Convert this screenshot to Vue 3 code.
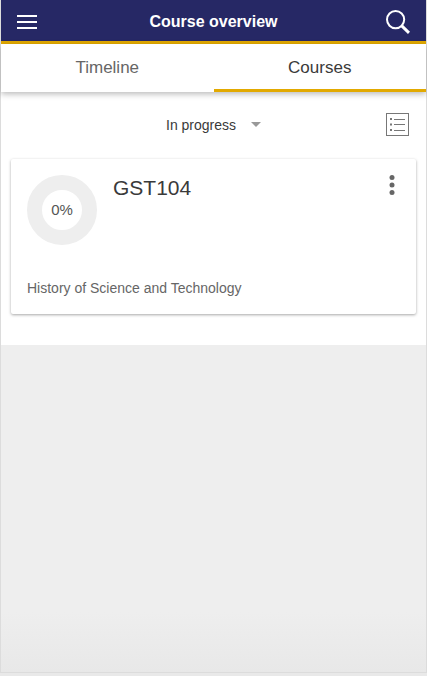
<template>
  <div class="app-frame">
    <header class="top-bar">
      <button class="bar-button" type="button" aria-label="Menu">
        <svg width="20" height="14" viewBox="0 0 20 14" fill="#fff">
          <rect width="20" height="2" />
          <rect y="6" width="20" height="2" />
          <rect y="12" width="20" height="2" />
        </svg>
      </button>
      <h1>Course overview</h1>
      <button class="bar-button search" type="button" aria-label="Search">
        <svg width="24" height="24" viewBox="0 0 24 24" fill="none" stroke="#fff">
          <circle cx="9.6" cy="9.6" r="8.6" stroke-width="2" />
          <path d="M15.8 15.8L23 22.8" stroke-width="3" />
        </svg>
      </button>
    </header>

    <nav class="tabs">
      <button
        v-for="tab in tabs"
        :key="tab"
        type="button"
        class="tab"
        :class="{ active: activeTab === tab }"
        @click="activeTab = tab"
      >
        {{ tab }}
      </button>
    </nav>

    <main class="content">
      <div class="filters">
        <div class="select-wrap">
          <select v-model="filter" aria-label="Filter courses">
            <option value="inprogress">In progress</option>
          </select>
          <svg class="caret" width="10" height="5" viewBox="0 0 10 5">
            <path d="M0 0H10L5 5Z" fill="#999" />
          </svg>
        </div>
        <button class="list-button" type="button" aria-label="List view">
          <svg width="23" height="23" viewBox="0 0 23 23" fill="none" stroke="#777">
            <rect x="0.5" y="0.5" width="22" height="22" />
            <path d="M8 6.5H19M8 11.5H19M8 17.5H19" />
            <path d="M4 6H6M4 11.5H6M4 17H6" stroke-width="2" />
          </svg>
        </button>
      </div>

      <article v-for="course in courses" :key="course.code" class="card">
        <div class="card-head">
          <div class="progress">
            <span>{{ course.progress }}%</span>
          </div>
          <h2>{{ course.code }}</h2>
          <button class="more-button" type="button" aria-label="Course options">
            <svg width="6" height="20" viewBox="0 0 6 20" fill="#666">
              <circle cx="3" cy="2.5" r="2.5" />
              <circle cx="3" cy="10" r="2.5" />
              <circle cx="3" cy="17.5" r="2.5" />
            </svg>
          </button>
        </div>
        <p class="course-name">{{ course.name }}</p>
      </article>
    </main>

    <div class="backdrop"></div>
  </div>
</template>

<script setup>
import { ref } from 'vue'

const tabs = ['Timeline', 'Courses']
const activeTab = ref('Courses')
const filter = ref('inprogress')

const courses = ref([
  { code: 'GST104', name: 'History of Science and Technology', progress: 0 },
])
</script>

<style>
body {
  background-color: #e9e9e9;
}
</style>

<style scoped>
.app-frame {
  box-sizing: border-box;
  min-height: calc(100vh - 3px);
  display: flex;
  flex-direction: column;
  border: 1px solid #dcdcdc;
  border-top: none;
  background-color: #eee;
  color: #3a3a3a;
  font-family: 'Liberation Sans', Arial, sans-serif;
}

button,
select {
  margin: 0;
  padding: 0;
  border: none;
  background: none;
  color: inherit;
  font-family: inherit;
  cursor: pointer;
}

svg {
  display: block;
}

.top-bar {
  display: grid;
  grid-template-columns: 1fr auto 1fr;
  align-items: center;
  height: 41px;
  padding: 0 16px;
  background-color: #262865;
  border-bottom: 3px solid #e2a900;
  color: #fff;
}

.top-bar h1 {
  margin: 0;
  padding-top: 3px;
  font-size: 16px;
  font-weight: 700;
  line-height: 20px;
}

.bar-button {
  justify-self: start;
  padding-top: 3px;
}

.bar-button.search {
  justify-self: end;
}

.tabs {
  position: relative;
  display: flex;
  background-color: #fff;
  box-shadow: 0 2px 6px rgba(0, 0, 0, 0.28);
}

.tab {
  flex: 1;
  height: 48px;
  padding-top: 2px;
  border-bottom: 3px solid transparent;
  color: #666;
  font-size: 17px;
  line-height: 20px;
}

.tab.active {
  border-bottom-color: #e2a900;
  color: #3a3a3a;
}

.content {
  padding: 16px 10px 31px;
  background-color: #fff;
}

.filters {
  display: grid;
  grid-template-columns: 1fr auto 1fr;
  align-items: center;
  height: 33px;
  margin-bottom: 18px;
  padding: 0 7px;
}

.select-wrap {
  position: relative;
  grid-column: 2;
}

.select-wrap select {
  appearance: none;
  display: block;
  padding-right: 24px;
  font-size: 14px;
  line-height: 20px;
}

.caret {
  position: absolute;
  top: 7px;
  right: 0;
  pointer-events: none;
}

.list-button {
  justify-self: end;
}

.card {
  padding: 16px;
  border-radius: 2px;
  background-color: #fff;
  box-shadow: 0 1px 3px rgba(0, 0, 0, 0.35);
}

.card-head {
  display: flex;
  align-items: flex-start;
  gap: 16px;
}

.progress {
  box-sizing: border-box;
  display: flex;
  align-items: center;
  justify-content: center;
  width: 70px;
  height: 70px;
  border: 15px solid #eee;
  border-radius: 50%;
  color: #555;
  font-size: 15px;
  line-height: 20px;
}

.card-head h2 {
  flex: 1;
  margin: 0;
  font-size: 21px;
  font-weight: 400;
  line-height: 26px;
}

.more-button {
  padding: 0 5px;
}

.course-name {
  margin: 33px 0 0;
  color: #666;
  font-size: 14px;
  line-height: 20px;
}

.backdrop {
  flex: 1;
  background: linear-gradient(to bottom, #eee calc(100% - 60px), #e8e8e8);
}
</style>
